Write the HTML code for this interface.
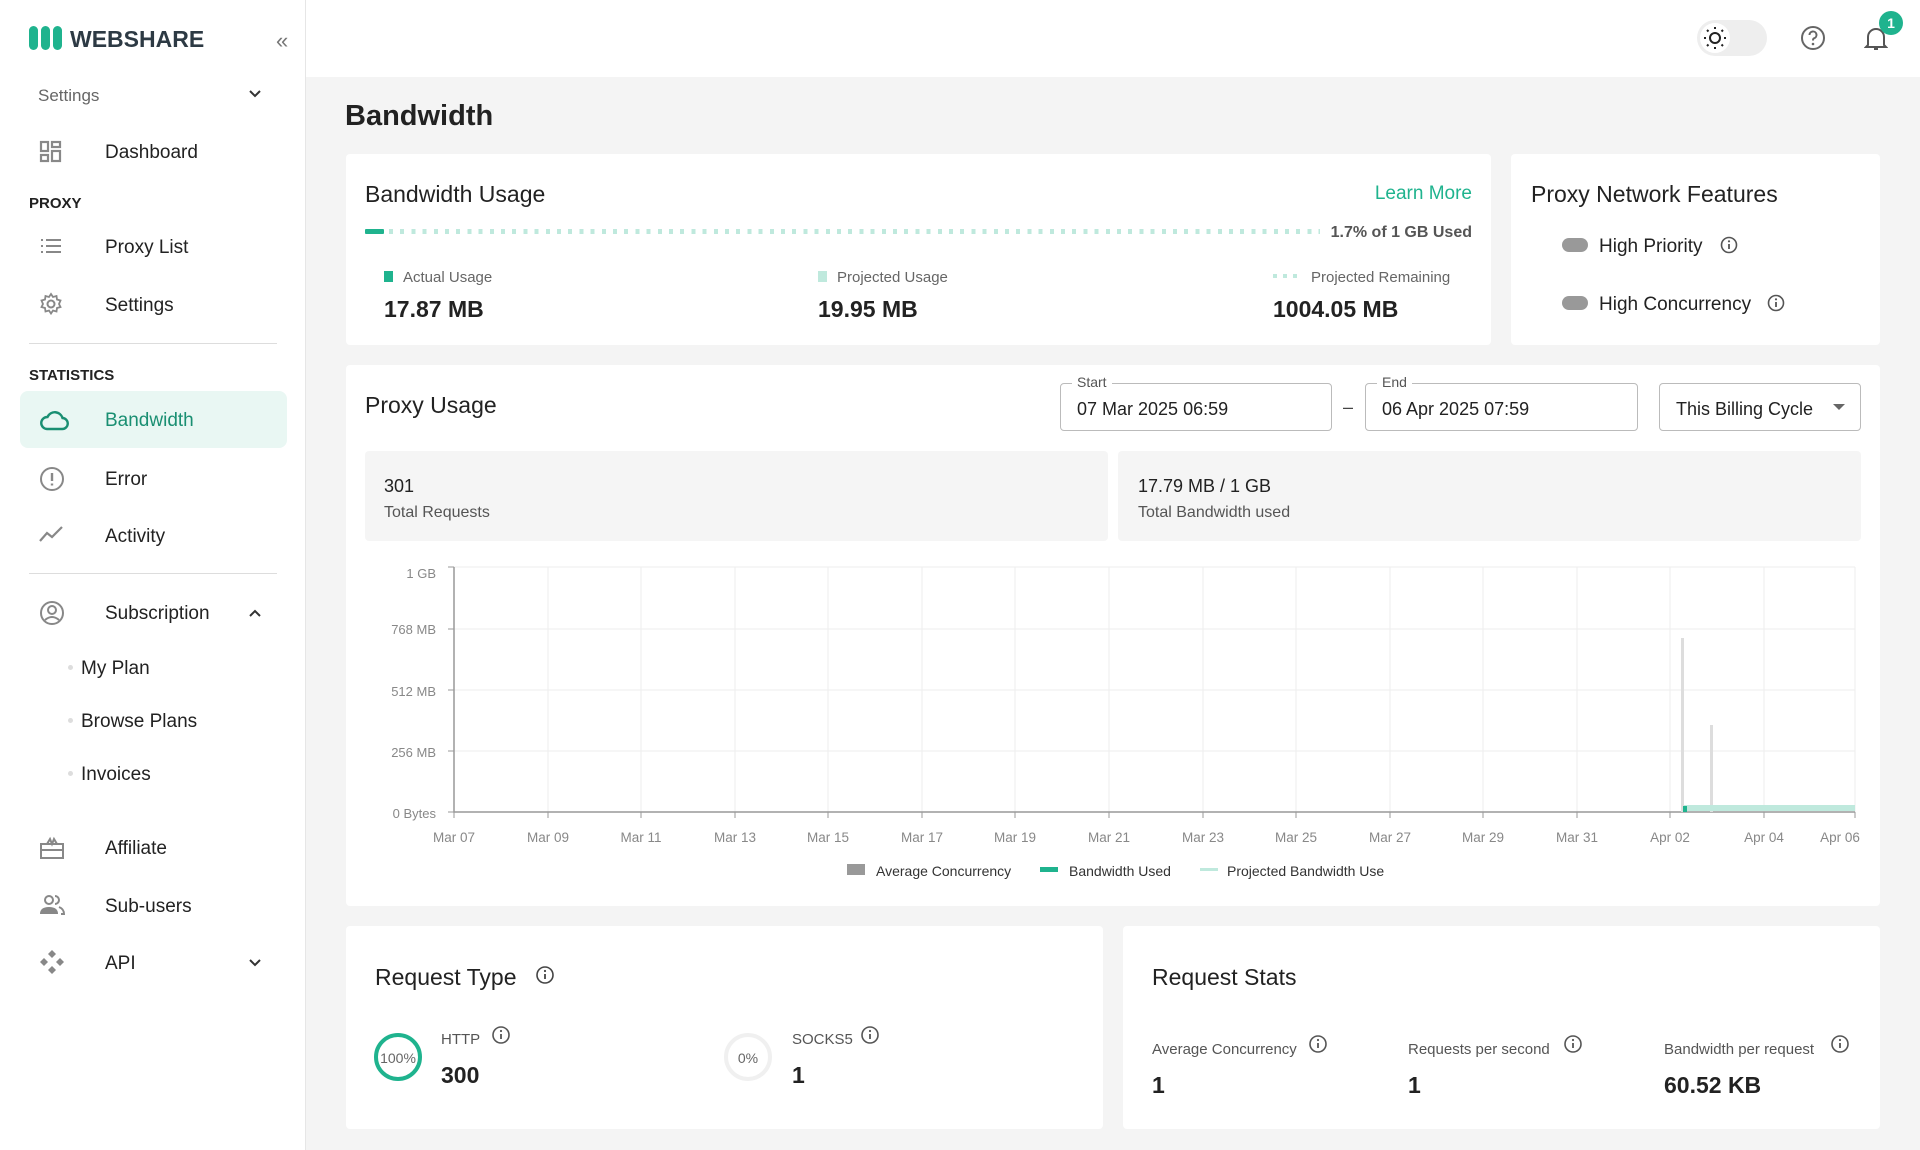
<!DOCTYPE html>
<html><head><meta charset="utf-8">
<style>
*{box-sizing:border-box;margin:0;padding:0}
body{width:1920px;height:1150px;overflow:hidden;font-family:"Liberation Sans",Arial,sans-serif;background:#f4f4f4;color:#222;position:relative}
.a{position:absolute;white-space:nowrap}
div.a:not(:empty){transform:translateY(2px)}
.side{position:absolute;left:0;top:0;width:306px;height:1150px;background:#fff;border-right:1px solid #e6e6e6}
.top{position:absolute;left:306px;top:0;width:1614px;height:77px;background:#fff}
.card{position:absolute;background:#fff;border-radius:4px}
.nav{font-size:19px;color:#222;line-height:24px}
.sec{font-size:15px;font-weight:bold;color:#222}
.ic{position:absolute;left:39px}
.g{color:#1fb38e}
.lbl{font-size:15px;color:#666}
.val{font-size:23px;font-weight:bold;color:#222}
.t{font-size:23px;color:#222;font-weight:500}
.ylab{font-size:13px;color:#888;text-align:right;width:80px;left:356px}
.xlab{font-size:13.5px;color:#888;width:80px;text-align:center}
</style></head><body>
<div class="side">
 <svg class="a" style="left:29px;top:26px" width="36" height="24" viewBox="0 0 36 24"><rect x="0" y="0" width="9" height="24" rx="4.5" fill="#1fb38e"/><rect x="12" y="0" width="9" height="24" rx="4.5" fill="#1fb38e"/><rect x="24" y="0" width="9" height="24" rx="4.5" fill="#1fb38e"/></svg>
 <div class="a" style="left:70px;top:24px;font-size:23px;font-weight:bold;color:#2d3a44">WEBSHARE</div>
 <div class="a" style="left:276px;top:26px;font-size:22px;color:#777">«</div>
 <div class="a" style="left:38px;top:84px;font-size:17px;color:#666">Settings</div>
 <svg class="a" style="left:248px;top:89px" width="14" height="10"><path d="M2 2l5 5 5-5" stroke="#333" stroke-width="2" fill="none"/></svg>
 <svg class="ic a" style="top:140px" width="24" height="24"><g fill="none" stroke="#888" stroke-width="2.2"><rect x="2" y="2" width="7" height="9"/><rect x="13" y="2" width="8" height="5"/><rect x="2" y="15" width="7" height="6"/><rect x="13" y="11" width="8" height="10"/></g></svg>
 <div class="a nav" style="left:105px;top:139px">Dashboard</div>
 <div class="a sec" style="left:29px;top:193px">PROXY</div>
 <svg class="ic a" style="top:236px" width="24" height="20"><g stroke="#888" stroke-width="2"><path d="M2 4h2M7 4h15M2 10h2M7 10h15M2 16h2M7 16h15"/></g></svg>
 <div class="a nav" style="left:105px;top:234px">Proxy List</div>
 <svg class="ic a" style="top:292px" width="24" height="24" viewBox="0 0 24 24"><circle cx="12" cy="12" r="3.5" fill="none" stroke="#888" stroke-width="2"/><path d="M12 2l2 3 3.5-1 .5 3.5 3.5 1-1.5 3.5 1.5 3-3.5 1-.5 3.5-3.5-1-2 3-2-3-3.5 1-.5-3.5-3.5-1 1.5-3-1.5-3.5 3.5-1 .5-3.5 3.5 1z" fill="none" stroke="#888" stroke-width="1.8"/></svg>
 <div class="a nav" style="left:105px;top:292px">Settings</div>
 <div class="a" style="left:29px;top:343px;width:248px;height:1px;background:#ddd"></div>
 <div class="a sec" style="left:29px;top:365px">STATISTICS</div>
 <div class="a" style="left:20px;top:391px;width:267px;height:57px;background:#e9f7f3;border-radius:8px"></div>
 <svg class="ic a" style="top:409px" width="30" height="22" viewBox="0 0 30 22"><path d="M8 20h15a5.5 5.5 0 0 0 .5-11A8 8 0 0 0 8.5 8 6 6 0 0 0 8 20z" fill="none" stroke="#1a8f72" stroke-width="2.4"/></svg>
 <div class="a nav" style="left:105px;top:407px;color:#1a8f72">Bandwidth</div>
 <svg class="ic a" style="top:466px" width="26" height="26"><circle cx="13" cy="13" r="11" fill="none" stroke="#888" stroke-width="2"/><path d="M13 7v8M13 17.5v2" stroke="#888" stroke-width="2.4"/></svg>
 <div class="a nav" style="left:105px;top:466px">Error</div>
 <svg class="ic a" style="top:524px" width="26" height="20"><path d="M1 17l7-8 5 4 10-10" fill="none" stroke="#888" stroke-width="2.2"/></svg>
 <div class="a nav" style="left:105px;top:523px">Activity</div>
 <div class="a" style="left:29px;top:573px;width:248px;height:1px;background:#ddd"></div>
 <svg class="ic a" style="top:600px" width="26" height="26"><circle cx="13" cy="13" r="11" fill="none" stroke="#888" stroke-width="2"/><circle cx="13" cy="10" r="4" fill="none" stroke="#888" stroke-width="2"/><path d="M6 20q7-6 14 0" fill="none" stroke="#888" stroke-width="2"/></svg>
 <div class="a nav" style="left:105px;top:600px">Subscription</div>
 <svg class="a" style="left:248px;top:608px" width="14" height="10"><path d="M2 8l5-5 5 5" stroke="#333" stroke-width="2" fill="none"/></svg>
 <div class="a" style="left:68px;top:665px;width:5px;height:5px;border-radius:50%;background:#ddd"></div>
 <div class="a nav" style="left:81px;top:655px">My Plan</div>
 <div class="a" style="left:68px;top:718px;width:5px;height:5px;border-radius:50%;background:#ddd"></div>
 <div class="a nav" style="left:81px;top:708px">Browse Plans</div>
 <div class="a" style="left:68px;top:771px;width:5px;height:5px;border-radius:50%;background:#ddd"></div>
 <div class="a nav" style="left:81px;top:761px">Invoices</div>
 <svg class="ic a" style="top:836px" width="26" height="24"><g fill="none" stroke="#888" stroke-width="2"><rect x="2" y="8" width="22" height="14"/><path d="M2 14h22M8 8l3-5 2 5 2-5 3 5"/></g></svg>
 <div class="a nav" style="left:105px;top:835px">Affiliate</div>
 <svg class="ic a" style="top:894px" width="26" height="22"><g fill="#888"><circle cx="10" cy="6" r="4" fill="none" stroke="#888" stroke-width="2"/><path d="M1 20q0-7 9-7t9 7z"/><path d="M16 2a4 4 0 0 1 0 8M20 13q5 2 5 7h-3" fill="none" stroke="#888" stroke-width="2"/></g></svg>
 <div class="a nav" style="left:105px;top:893px">Sub-users</div>
 <svg class="ic a" style="top:949px" width="26" height="26"><g fill="#888"><path d="M13 1l4 4-4 4-4-4zM13 17l4 4-4 4-4-4zM1 13l4-4 4 4-4 4zM17 13l4-4 4 4-4 4z"/></g></svg>
 <div class="a nav" style="left:105px;top:950px">API</div>
 <svg class="a" style="left:248px;top:958px" width="14" height="10"><path d="M2 2l5 5 5-5" stroke="#333" stroke-width="2" fill="none"/></svg>
</div>
<div class="top"></div>
<div class="a" style="left:1697px;top:20px;width:70px;height:36px;border-radius:18px;background:#eee"></div>
<div class="a" style="left:1700px;top:23px;width:30px;height:30px;border-radius:50%;background:#fff"></div>
<svg class="a" style="left:1703px;top:26px" width="24" height="24" viewBox="0 0 24 24"><circle cx="12" cy="12" r="5" fill="none" stroke="#222" stroke-width="2"/><g stroke="#222" stroke-width="2"><path d="M12 1v2M12 21v2M1 12h2M21 12h2M4 4l1.5 1.5M18.5 18.5L20 20M4 20l1.5-1.5M18.5 5.5L20 4"/></g></svg>
<svg class="a" style="left:1800px;top:25px" width="26" height="26"><circle cx="13" cy="13" r="11" fill="none" stroke="#666" stroke-width="2"/><path d="M9.5 10a3.5 3.5 0 1 1 4.5 3.3c-1 .4-1 1-1 2.2" fill="none" stroke="#666" stroke-width="2"/><circle cx="13" cy="19" r="1.3" fill="#666"/></svg>
<svg class="a" style="left:1864px;top:25px" width="24" height="28"><path d="M4 20V12a8 8 0 0 1 16 0v8l2 2H2z" fill="none" stroke="#555" stroke-width="2"/><path d="M10 24h4" stroke="#555" stroke-width="2"/></svg>
<div class="a" style="left:1879px;top:9px;width:24px;height:24px;border-radius:50%;background:#1fb38e;color:#fff;font-size:14px;font-weight:bold;text-align:center;line-height:24px">1</div>

<div class="a" style="left:345px;top:98px;font-size:29px;font-weight:bold;color:#222">Bandwidth</div>

<div class="card" style="left:346px;top:154px;width:1145px;height:191px"></div>
<div class="a t" style="left:365px;top:179px">Bandwidth Usage</div>
<div class="a g" style="left:1374px;top:181px;font-size:19px;width:98px;text-align:right">Learn More</div>
<div class="a" style="left:365px;top:229px;width:19px;height:5px;background:#1fb38e;border-radius:1px"></div>
<div class="a" style="left:389px;top:229px;width:931px;height:5px;background:repeating-linear-gradient(90deg,#bfe9dd 0 4px,transparent 4px 11.2px)"></div>
<div class="a" style="left:1322px;top:222px;font-size:16px;color:#555;font-weight:bold;width:150px;text-align:right">1.7% of 1 GB Used</div>
<div class="a" style="left:384px;top:271px;width:9px;height:11px;background:#1fb38e"></div>
<div class="a lbl" style="left:403px;top:267px">Actual Usage</div>
<div class="a val" style="left:384px;top:294px">17.87 MB</div>
<div class="a" style="left:818px;top:271px;width:9px;height:11px;background:#bfe9dd"></div>
<div class="a lbl" style="left:837px;top:267px">Projected Usage</div>
<div class="a val" style="left:818px;top:294px">19.95 MB</div>
<div class="a" style="left:1273px;top:274px;width:30px;height:4px;background:repeating-linear-gradient(90deg,#bfe9dd 0 4px,transparent 4px 10px)"></div>
<div class="a lbl" style="left:1311px;top:267px">Projected Remaining</div>
<div class="a val" style="left:1273px;top:294px">1004.05 MB</div>

<div class="card" style="left:1511px;top:154px;width:369px;height:191px"></div>
<div class="a t" style="left:1531px;top:179px">Proxy Network Features</div>
<div class="a" style="left:1562px;top:238px;width:26px;height:14px;background:#999;border-radius:7px"></div>
<div class="a" style="left:1599px;top:234px;font-size:19px">High Priority</div>
<svg class="a" style="left:1720px;top:236px" width="18" height="18"><circle cx="9" cy="9" r="7.5" fill="none" stroke="#555" stroke-width="1.6"/><path d="M9 8v5" stroke="#555" stroke-width="1.8"/><circle cx="9" cy="5.3" r="1.1" fill="#555"/></svg>
<div class="a" style="left:1562px;top:296px;width:26px;height:14px;background:#999;border-radius:7px"></div>
<div class="a" style="left:1599px;top:292px;font-size:19px">High Concurrency</div>
<svg class="a" style="left:1767px;top:294px" width="18" height="18"><circle cx="9" cy="9" r="7.5" fill="none" stroke="#555" stroke-width="1.6"/><path d="M9 8v5" stroke="#555" stroke-width="1.8"/><circle cx="9" cy="5.3" r="1.1" fill="#555"/></svg>

<div class="card" style="left:346px;top:365px;width:1534px;height:541px"></div>
<div class="a t" style="left:365px;top:390px">Proxy Usage</div>
<div class="a" style="left:1060px;top:383px;width:272px;height:48px;border:1px solid #bbb;border-radius:4px"></div>
<div class="a" style="left:1072px;top:372px;background:#fff;padding:0 5px;font-size:14px;color:#555">Start</div>
<div class="a" style="left:1077px;top:397px;font-size:18px">07 Mar 2025 06:59</div>
<div class="a" style="left:1343px;top:395px;font-size:18px;color:#444">–</div>
<div class="a" style="left:1365px;top:383px;width:273px;height:48px;border:1px solid #bbb;border-radius:4px"></div>
<div class="a" style="left:1377px;top:372px;background:#fff;padding:0 5px;font-size:14px;color:#555">End</div>
<div class="a" style="left:1382px;top:397px;font-size:18px">06 Apr 2025 07:59</div>
<div class="a" style="left:1659px;top:383px;width:202px;height:48px;border:1px solid #bbb;border-radius:4px"></div>
<div class="a" style="left:1676px;top:397px;font-size:18px">This Billing Cycle</div>
<svg class="a" style="left:1833px;top:404px" width="12" height="7"><path d="M0 0h12L6 6z" fill="#666"/></svg>
<div class="a" style="left:365px;top:451px;width:743px;height:90px;background:#f5f5f5;border-radius:4px"></div>
<div class="a" style="left:384px;top:474px;font-size:18px">301</div>
<div class="a" style="left:384px;top:502px;font-size:16px;color:#555">Total Requests</div>
<div class="a" style="left:1118px;top:451px;width:743px;height:90px;background:#f5f5f5;border-radius:4px"></div>
<div class="a" style="left:1138px;top:474px;font-size:18px">17.79 MB / 1 GB</div>
<div class="a" style="left:1138px;top:502px;font-size:16px;color:#555">Total Bandwidth used</div>

<svg class="a" style="left:0;top:0" width="1920" height="1150">
 <g stroke="#eee" stroke-width="1">
  <path d="M454 567H1855M454 629H1855M454 690H1855M454 751H1855"/>
  <path d="M548 567V812M641 567V812M735 567V812M828 567V812M922 567V812M1015 567V812M1109 567V812M1203 567V812M1296 567V812M1390 567V812M1483 567V812M1577 567V812M1670 567V812M1764 567V812M1855 567V812"/>
 </g>
 <path d="M454 567V812H1855" stroke="#999" stroke-width="1.5" fill="none"/>
 <g stroke="#999"><path d="M448 567h6M448 629h6M448 690h6M448 751h6M448 812h6"/>
 <path d="M454 812v6M548 812v6M641 812v6M735 812v6M828 812v6M922 812v6M1015 812v6M1109 812v6M1203 812v6M1296 812v6M1390 812v6M1483 812v6M1577 812v6M1670 812v6M1764 812v6M1855 812v6"/></g>
 <rect x="1681" y="638" width="3" height="174" fill="#ddd"/>
 <rect x="1710" y="725" width="3" height="87" fill="#ddd"/>
 <rect x="1684" y="805" width="171" height="6" fill="#bfe9dd"/>
 <rect x="1683" y="806" width="4" height="6" fill="#1fb38e"/>
</svg>
<div class="a ylab" style="top:564px">1 GB</div>
<div class="a ylab" style="top:620px">768 MB</div>
<div class="a ylab" style="top:682px">512 MB</div>
<div class="a ylab" style="top:743px">256 MB</div>
<div class="a ylab" style="top:804px">0 Bytes</div>
<div class="a xlab" style="left:414px;top:828px">Mar 07</div>
<div class="a xlab" style="left:508px;top:828px">Mar 09</div>
<div class="a xlab" style="left:601px;top:828px">Mar 11</div>
<div class="a xlab" style="left:695px;top:828px">Mar 13</div>
<div class="a xlab" style="left:788px;top:828px">Mar 15</div>
<div class="a xlab" style="left:882px;top:828px">Mar 17</div>
<div class="a xlab" style="left:975px;top:828px">Mar 19</div>
<div class="a xlab" style="left:1069px;top:828px">Mar 21</div>
<div class="a xlab" style="left:1163px;top:828px">Mar 23</div>
<div class="a xlab" style="left:1256px;top:828px">Mar 25</div>
<div class="a xlab" style="left:1350px;top:828px">Mar 27</div>
<div class="a xlab" style="left:1443px;top:828px">Mar 29</div>
<div class="a xlab" style="left:1537px;top:828px">Mar 31</div>
<div class="a xlab" style="left:1630px;top:828px">Apr 02</div>
<div class="a xlab" style="left:1724px;top:828px">Apr 04</div>
<div class="a xlab" style="left:1800px;top:828px">Apr 06</div>
<div class="a" style="left:847px;top:864px;width:18px;height:11px;background:#999"></div>
<div class="a" style="left:876px;top:861px;font-size:14px;color:#333">Average Concurrency</div>
<div class="a" style="left:1040px;top:867px;width:18px;height:5px;background:#1fb38e"></div>
<div class="a" style="left:1069px;top:861px;font-size:14px;color:#333">Bandwidth Used</div>
<div class="a" style="left:1200px;top:868px;width:18px;height:3px;background:#bfe9dd"></div>
<div class="a" style="left:1227px;top:861px;font-size:14px;color:#333">Projected Bandwidth Use</div>

<div class="card" style="left:346px;top:926px;width:757px;height:203px"></div>
<div class="a t" style="left:375px;top:962px">Request Type</div>
<svg class="a" style="left:535px;top:965px" width="20" height="20"><circle cx="10" cy="10" r="8" fill="none" stroke="#444" stroke-width="1.6"/><path d="M10 9v5" stroke="#444" stroke-width="1.8"/><circle cx="10" cy="6" r="1.1" fill="#444"/></svg>
<svg class="a" style="left:372px;top:1031px" width="52" height="52"><circle cx="26" cy="26" r="22" fill="none" stroke="#1fb38e" stroke-width="4"/></svg>
<div class="a" style="left:372px;top:1048px;width:52px;text-align:center;font-size:14px;color:#666">100%</div>
<div class="a" style="left:441px;top:1029px;font-size:15px;color:#555">HTTP</div>
<svg class="a" style="left:491px;top:1025px" width="20" height="20"><circle cx="10" cy="10" r="8" fill="none" stroke="#555" stroke-width="1.6"/><path d="M10 9v5" stroke="#555" stroke-width="1.8"/><circle cx="10" cy="6" r="1.1" fill="#555"/></svg>
<div class="a" style="left:441px;top:1060px;font-size:23px;font-weight:bold">300</div>
<svg class="a" style="left:722px;top:1031px" width="52" height="52"><circle cx="26" cy="26" r="22" fill="none" stroke="#f0f0f0" stroke-width="4"/></svg>
<div class="a" style="left:722px;top:1048px;width:52px;text-align:center;font-size:14px;color:#666">0%</div>
<div class="a" style="left:792px;top:1029px;font-size:15px;color:#555">SOCKS5</div>
<svg class="a" style="left:860px;top:1025px" width="20" height="20"><circle cx="10" cy="10" r="8" fill="none" stroke="#555" stroke-width="1.6"/><path d="M10 9v5" stroke="#555" stroke-width="1.8"/><circle cx="10" cy="6" r="1.1" fill="#555"/></svg>
<div class="a" style="left:792px;top:1060px;font-size:23px;font-weight:bold">1</div>

<div class="card" style="left:1123px;top:926px;width:757px;height:203px"></div>
<div class="a t" style="left:1152px;top:962px">Request Stats</div>
<div class="a" style="left:1152px;top:1039px;font-size:15px;color:#555">Average Concurrency</div>
<svg class="a" style="left:1308px;top:1034px" width="20" height="20"><circle cx="10" cy="10" r="8" fill="none" stroke="#555" stroke-width="1.6"/><path d="M10 9v5" stroke="#555" stroke-width="1.8"/><circle cx="10" cy="6" r="1.1" fill="#555"/></svg>
<div class="a" style="left:1152px;top:1070px;font-size:23px;font-weight:bold">1</div>
<div class="a" style="left:1408px;top:1039px;font-size:15px;color:#555">Requests per second</div>
<svg class="a" style="left:1563px;top:1034px" width="20" height="20"><circle cx="10" cy="10" r="8" fill="none" stroke="#555" stroke-width="1.6"/><path d="M10 9v5" stroke="#555" stroke-width="1.8"/><circle cx="10" cy="6" r="1.1" fill="#555"/></svg>
<div class="a" style="left:1408px;top:1070px;font-size:23px;font-weight:bold">1</div>
<div class="a" style="left:1664px;top:1039px;font-size:15px;color:#555">Bandwidth per request</div>
<svg class="a" style="left:1830px;top:1034px" width="20" height="20"><circle cx="10" cy="10" r="8" fill="none" stroke="#555" stroke-width="1.6"/><path d="M10 9v5" stroke="#555" stroke-width="1.8"/><circle cx="10" cy="6" r="1.1" fill="#555"/></svg>
<div class="a" style="left:1664px;top:1070px;font-size:23px;font-weight:bold">60.52 KB</div>
</body></html>
